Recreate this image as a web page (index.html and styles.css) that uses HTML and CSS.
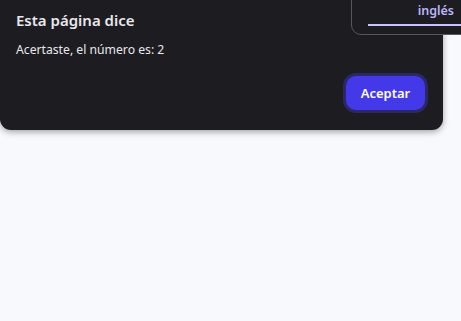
FILE: index.html
```html
<!DOCTYPE html>
<html>
<head>
    <title>Alerta</title>
    <link rel="stylesheet" href="styles.css">
</head>
<body>
    <div class="dialog">
        <div class="dialog-title">Esta página dice</div>
        <div class="dialog-message">Acertaste, el número es: 2</div>
        <div class="dialog-actions">
            <button class="btn-accept">Aceptar</button>
        </div>
    </div>
    <div class="translate">
        <div class="translate-tab">inglés</div>
    </div>
</body>
</html>
```

FILE: styles.css
```css
* {
    margin: 0px;
    padding: 0px;
    box-sizing: border-box;
}
body {
    font-family: "Noto Sans", "Open Sans", sans-serif;
    background: #f8f9fc;
    width: 461px;
    height: 321px;
    overflow: hidden;
    position: relative;
}
.dialog {
    width: 443px;
    height: 130px;
    background: #1d1c21;
    border-bottom-right-radius: 11px;
    border-bottom-left-radius: 11px;
    box-shadow: 0 2px 6px rgba(0, 0, 0, 0.35);
    padding: 10px 16px 0 16px;
    color: #e8e8ec;
}
.dialog-title {
    font-size: 15px;
    font-weight: 600;
    line-height: 20px;
}
.dialog-message {
    font-size: 12.2px;
    line-height: 18px;
    margin-top: 11px;
}
.dialog-actions {
    display: flex;
    justify-content: flex-end;
    margin-top: 17px;
}
.btn-accept {
    width: 79px;
    height: 34px;
    margin-right: 2px;
    background: #4339e8;
    color: #fff;
    border: none;
    border-radius: 10px;
    box-shadow: 0 0 0 3px #2a2866;
    font-family: inherit;
    font-size: 13px;
    font-weight: 600;
}
.translate {
    position: absolute;
    top: -1px;
    left: 351px;
    width: 112px;
    height: 36px;
    background: #1d1c21;
    border: 1px solid #58575c;
    border-bottom-left-radius: 10px;
    padding-left: 16px;
}
.translate-tab {
    height: 26px;
    border-bottom: 2px solid #c6c3fb;
    color: #b9b6f6;
    font-size: 12.5px;
    font-weight: 600;
    line-height: 22px;
    text-align: right;
    padding-right: 8px;
}
```
